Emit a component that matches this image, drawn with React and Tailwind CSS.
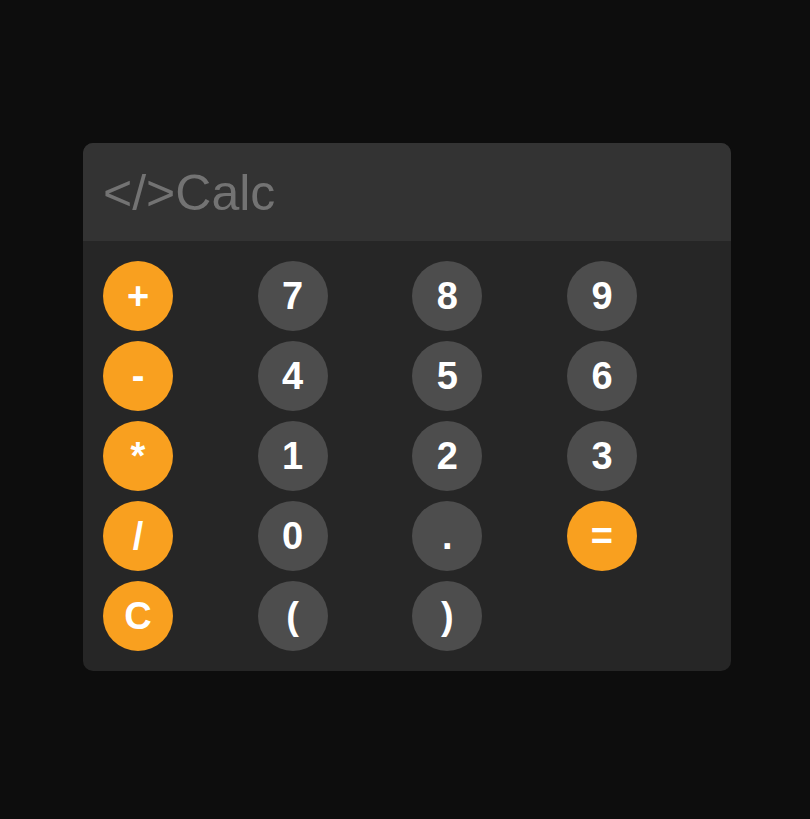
import React from 'react';

const keys = [
  { label: '+', op: true },
  { label: '7' },
  { label: '8' },
  { label: '9' },
  { label: '-', op: true },
  { label: '4' },
  { label: '5' },
  { label: '6' },
  { label: '*', op: true },
  { label: '1' },
  { label: '2' },
  { label: '3' },
  { label: '/', op: true },
  { label: '0' },
  { label: '.' },
  { label: '=', op: true },
  { label: 'C', op: true },
  { label: '(' },
  { label: ')' },
];

export default function App() {
  return (
    <div className="min-h-screen bg-[#0d0d0d] pt-[143px] pl-[83px] font-['Liberation_Sans',Arial,sans-serif]">
      <div className="w-[648px] rounded-[10px] overflow-hidden bg-[#262626]">
        <div className="h-[98px] bg-[#333333] flex items-center px-5">
          <span className="text-[50px] leading-none text-[#737373] mt-[2px]">&lt;/&gt;Calc</span>
        </div>
        <div className="grid grid-cols-[repeat(4,154.67px)] gap-y-[10px] p-5">
          {keys.map((k) => (
            <button
              key={k.label}
              className={`w-[70px] h-[70px] rounded-full flex items-center justify-center text-white font-bold text-[38px] leading-none ${
                k.op ? 'bg-[#f9a01f]' : 'bg-[#4d4d4d]'
              }`}
            >
              {k.label}
            </button>
          ))}
        </div>
      </div>
    </div>
  );
}
